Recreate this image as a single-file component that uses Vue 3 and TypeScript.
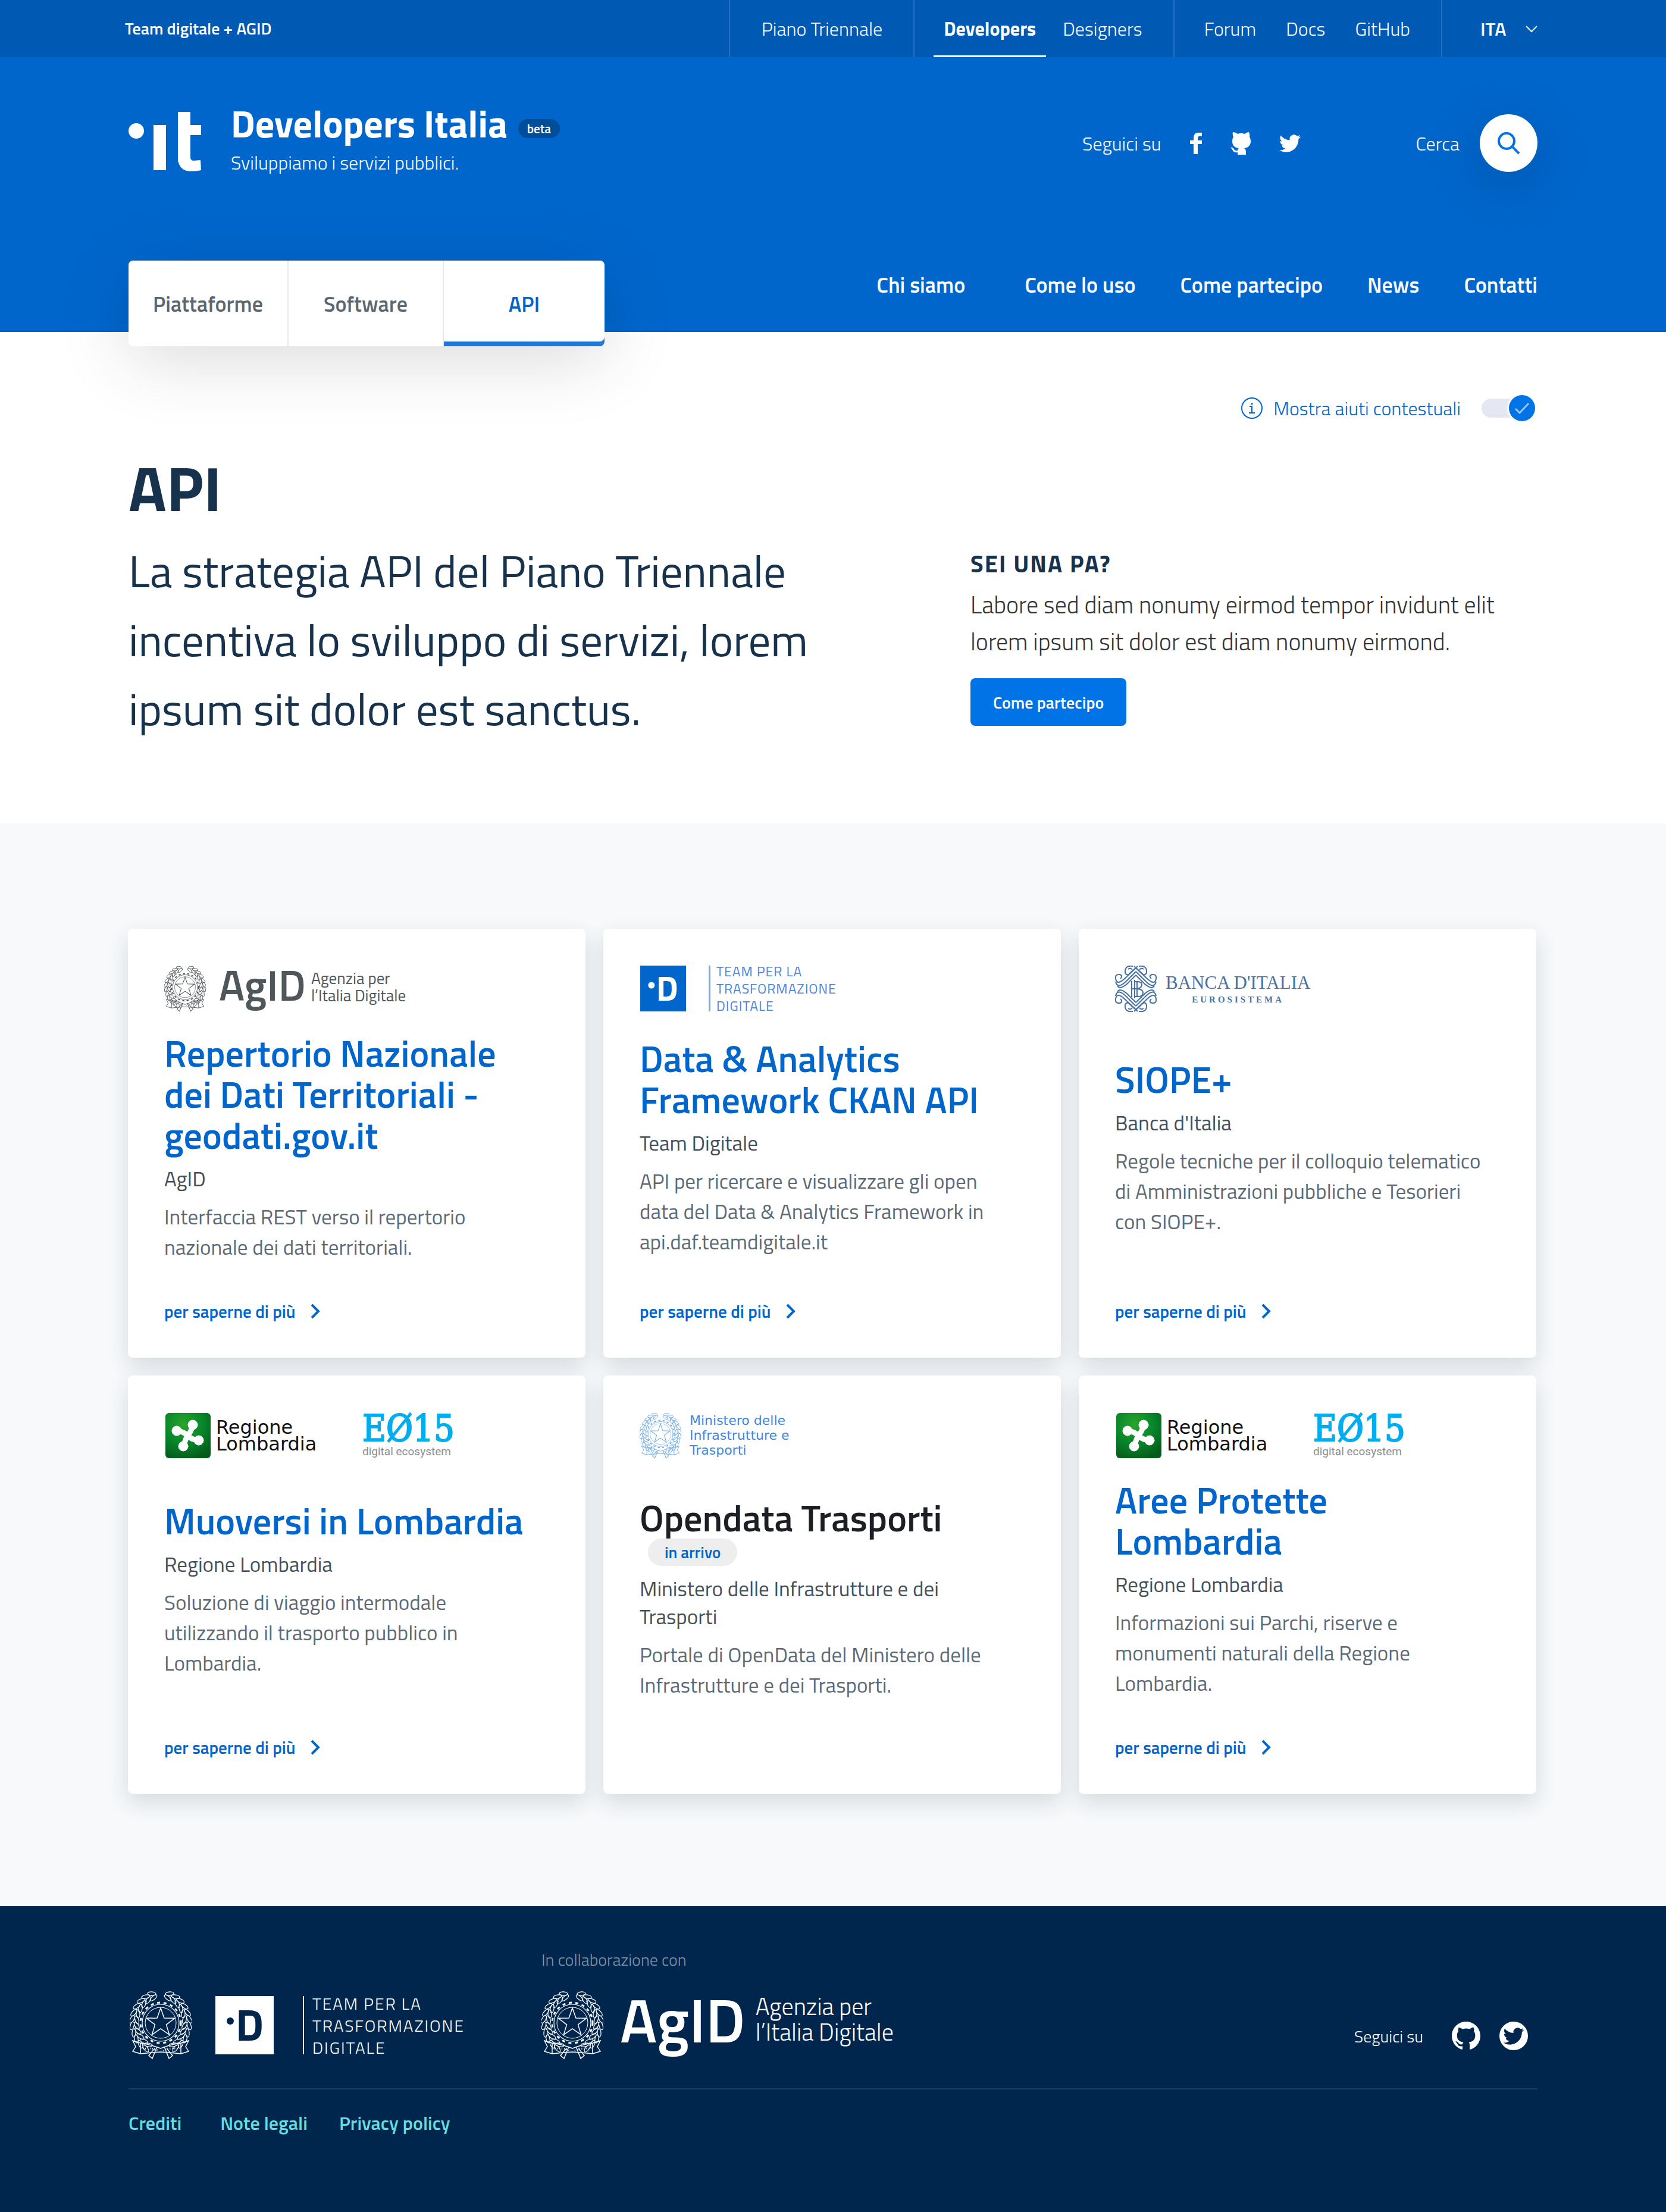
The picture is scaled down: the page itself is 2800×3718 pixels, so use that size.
<script setup lang="ts">
import { ref } from 'vue'

type LogoKind = 'agid' | 'team' | 'banca' | 'lombardia' | 'ministero'

interface ApiCard {
  logo: LogoKind
  title: string
  owner: string
  text: string
  soon?: boolean
}

const cards: ApiCard[] = [
  {
    logo: 'agid',
    title: 'Repertorio Nazionale dei Dati Territoriali - geodati.gov.it',
    owner: 'AgID',
    text: 'Interfaccia REST verso il repertorio nazionale dei dati territoriali.',
  },
  {
    logo: 'team',
    title: 'Data & Analytics Framework CKAN API',
    owner: 'Team Digitale',
    text: 'API per ricercare e visualizzare gli open data del Data & Analytics Framework in api.daf.teamdigitale.it',
  },
  {
    logo: 'banca',
    title: 'SIOPE+',
    owner: "Banca d'Italia",
    text: 'Regole tecniche per il colloquio telematico di Amministrazioni pubbliche e Tesorieri con SIOPE+.',
  },
  {
    logo: 'lombardia',
    title: 'Muoversi in Lombardia',
    owner: 'Regione Lombardia',
    text: 'Soluzione di viaggio intermodale utilizzando il trasporto pubblico in Lombardia.',
  },
  {
    logo: 'ministero',
    title: 'Opendata Trasporti',
    owner: 'Ministero delle Infrastrutture e dei Trasporti',
    text: 'Portale di OpenData del Ministero delle Infrastrutture e dei Trasporti.',
    soon: true,
  },
  {
    logo: 'lombardia',
    title: 'Aree Protette Lombardia',
    owner: 'Regione Lombardia',
    text: 'Informazioni sui Parchi, riserve e monumenti naturali della Regione Lombardia.',
  },
]

const tabs = ['Piattaforme', 'Software', 'API']
const activeTab = ref('API')
const mainNav = ['Chi siamo', 'Come lo uso', 'Come partecipo', 'News', 'Contatti']
const footerLinks = ['Crediti', 'Note legali', 'Privacy policy']
const showHelp = ref(true)
const language = ref('ITA')

// Leaves of the wreath, laid along both sides of an ellipse.
interface Leaf {
  x: number
  y: number
  angle: number
}
const leaves: Leaf[] = []
for (const side of [-1, 1]) {
  for (let i = 0; i < 11; i++) {
    const t = ((-72 + i * 13) * Math.PI) / 180
    for (const ring of [0, 1]) {
      const rx = 40 + ring * 8
      const ry = 44 + ring * 7
      const x = 52 + side * Math.cos(t) * rx
      const y = 54 + Math.sin(t) * ry
      const angle = side * ((t * 180) / Math.PI + 90 + (ring ? -22 : 22))
      leaves.push({ x: Math.round(x), y: Math.round(y), angle: Math.round(angle) })
    }
  }
}
const starPoints = Array.from({ length: 10 }, (_, i) => {
  const r = i % 2 ? 10 : 25
  const a = (-90 + i * 36) * (Math.PI / 180)
  return `${(52 + Math.cos(a) * r).toFixed(1)},${(54 + Math.sin(a) * r).toFixed(1)}`
}).join(' ')
</script>

<template>
  <div class="page">
    <svg class="defs" aria-hidden="true">
      <symbol id="emblem" viewBox="0 0 104 116">
        <g fill="none" stroke="currentColor">
          <ellipse
            v-for="(leaf, i) in leaves"
            :key="i"
            :cx="leaf.x"
            :cy="leaf.y"
            rx="7"
            ry="3"
            stroke-width="1.3"
            :transform="`rotate(${leaf.angle} ${leaf.x} ${leaf.y})`"
          />
          <circle cx="52" cy="54" r="34" stroke-width="3" stroke-dasharray="5 6" />
          <circle cx="52" cy="54" r="31" stroke-width="1.2" />
          <circle cx="52" cy="54" r="26" stroke-width="1" />
          <polygon :points="starPoints" stroke-width="1.5" />
          <path d="M5 84 L18 88 Q34 90 52 97 Q70 90 86 88 L99 84 L94 94 L99 102 L86 106 Q70 104 52 103 Q34 104 18 106 L5 102 L10 94 Z" stroke-width="1.4" />
          <path d="M18 88 V106 M86 88 V106 M46 94 L38 114 L32 109 L42 97 M58 94 L66 114 L72 109 L62 97" stroke-width="1.5" />
          <path d="M22 98 Q36 95 48 101 M56 101 Q68 95 82 98" stroke-width="3" stroke-dasharray="1 3" />
        </g>
      </symbol>
      <symbol id="bird" viewBox="0 0 24 20">
        <path
          transform="translate(0 -2)"
          fill="currentColor"
          d="M23.953 4.57a10 10 0 01-2.825.775 4.958 4.958 0 002.163-2.723c-.951.555-2.005.959-3.127 1.184a4.92 4.92 0 00-8.384 4.482C7.69 8.095 4.067 6.13 1.64 3.162a4.822 4.822 0 00-.666 2.475c0 1.71.87 3.213 2.188 4.096a4.904 4.904 0 01-2.228-.616v.06a4.923 4.923 0 003.946 4.827 4.996 4.996 0 01-2.212.085 4.936 4.936 0 004.604 3.417 9.867 9.867 0 01-6.102 2.105c-.39 0-.779-.023-1.17-.067a13.995 13.995 0 007.557 2.209c9.053 0 13.998-7.496 13.998-13.985 0-.21 0-.42-.015-.63A9.935 9.935 0 0024 4.59z"
        />
      </symbol>
    </svg>

    <div class="topbar">
      <div class="container topbar-row">
        <a class="owner" href="#">Team digitale + AGID</a>
        <nav class="topnav" aria-label="Siti">
          <div class="group"><a href="#">Piano Triennale</a></div>
          <div class="group group-sites">
            <a class="current" href="#">Developers</a>
            <a href="#">Designers</a>
          </div>
          <div class="group">
            <a href="#">Forum</a>
            <a href="#">Docs</a>
            <a href="#">GitHub</a>
          </div>
          <div class="group group-lang">
            <select v-model="language" aria-label="Lingua">
              <option>ITA</option>
              <option>ENG</option>
            </select>
            <svg class="caret" viewBox="0 0 20 12" aria-hidden="true">
              <path d="M1 1 L10 10 L19 1" fill="none" stroke="#fff" stroke-width="2" />
            </svg>
          </div>
        </nav>
      </div>
    </div>

    <header class="header">
      <div class="container">
        <div class="brand-row">
          <a class="brand" href="#">
            <svg class="mark" viewBox="0 0 122 100" aria-hidden="true">
              <g fill="#fff">
                <circle cx="13" cy="32" r="13" />
                <rect x="42" y="22" width="21" height="76" />
                <rect x="83" y="0" width="21" height="84" />
                <rect x="83" y="22" width="39" height="17" />
                <path d="M83 76 H104 Q104 82 110 82 L121 81 L122 98 Q114 100 106 100 Q83 100 83 76 Z" />
              </g>
            </svg>
            <span class="brand-text">
              <span class="brand-title">Developers Italia <span class="beta">beta</span></span>
              <span class="tagline">Sviluppiamo i servizi pubblici.</span>
            </span>
          </a>
          <div class="social">
            <span>Seguici su</span>
            <a href="#" aria-label="Facebook">
              <svg class="ico-f" viewBox="0 0 20 36"><path fill="#fff" d="M6 36 V19 H0 V13 H6 V9 Q6 0 14 0 H20 V6 H16 Q13 6 13 9 V13 H20 V19 H13 V36 Z" /></svg>
            </a>
            <a href="#" aria-label="GitHub">
              <svg class="ico-cat" viewBox="0 0 34 38"><path fill="#fff" d="M4 0 Q8 0 12 3 Q18 1 24 3 Q28 0 31 0 Q33 5 32 8 Q34 11 34 15 Q34 26 23 27 Q26 29 26 32 V38 H12 V34 Q6 35 4 31 Q3 28 0 26 Q4 25 6 29 Q8 32 12 31 Q12 28 14 27 Q3 26 3 15 Q3 11 5 8 Q3 5 4 0 Z" /></svg>
            </a>
            <a href="#" aria-label="Twitter"><svg class="ico-bird"><use href="#bird" /></svg></a>
          </div>
          <div class="search">
            <label for="search-button">Cerca</label>
            <button id="search-button" type="button" aria-label="Cerca">
              <svg viewBox="0 0 38 38" aria-hidden="true">
                <circle cx="15" cy="15" r="13" fill="none" stroke="#0073e6" stroke-width="4" />
                <path d="M24 24 L36 36" stroke="#0073e6" stroke-width="4" />
              </svg>
            </button>
          </div>
        </div>
        <div class="nav-row">
          <div class="tabs">
            <button
              v-for="tab in tabs"
              :key="tab"
              type="button"
              :class="{ active: tab === activeTab }"
              @click="activeTab = tab"
            >
              {{ tab }}
            </button>
          </div>
          <nav class="mainnav" aria-label="Principale">
            <a v-for="item in mainNav" :key="item" href="#">{{ item }}</a>
          </nav>
        </div>
      </div>
    </header>

    <main>
      <section class="hero">
        <div class="container">
          <div class="help">
            <svg class="info" viewBox="0 0 36 36" aria-hidden="true">
              <g fill="none" stroke="#0066cc" stroke-width="2">
                <circle cx="18" cy="18" r="17" />
                <path d="M14 15 H18 V26 M13 26 H23" />
                <path d="M18 9 V12" stroke-width="3" />
              </g>
            </svg>
            <label for="help-toggle">Mostra aiuti contestuali</label>
            <span class="switch">
              <input id="help-toggle" v-model="showHelp" type="checkbox" />
              <span class="knob">
                <svg viewBox="0 0 26 20" aria-hidden="true"><path d="M2 11 L9 18 L24 2" fill="none" stroke="#99c7f5" stroke-width="3" /></svg>
              </span>
            </span>
          </div>
          <div class="hero-grid">
            <div>
              <h1>API</h1>
              <p class="lead">La strategia API del Piano Triennale incentiva lo sviluppo di servizi, lorem ipsum sit dolor est sanctus.</p>
            </div>
            <div class="aside">
              <h2>SEI UNA PA?</h2>
              <p>Labore sed diam nonumy eirmod tempor invidunt elit lorem ipsum sit dolor est diam nonumy eirmond.</p>
              <button type="button">Come partecipo</button>
            </div>
          </div>
        </div>
      </section>

      <section class="catalog">
        <div class="container">
          <div class="grid">
            <article v-for="card in cards" :key="card.title" class="card">
              <div v-if="card.logo === 'agid'" class="logo logo-agid">
                <svg class="emblem"><use href="#emblem" /></svg>
                <span class="agid-name">AgID</span>
                <span class="agid-full">Agenzia per<br />l’Italia Digitale</span>
              </div>
              <div v-else-if="card.logo === 'team'" class="logo logo-team">
                <svg class="tile" viewBox="0 0 98 98" aria-hidden="true">
                  <rect width="98" height="98" fill="#0066cc" />
                  <circle cx="24" cy="42" r="7" fill="#fff" />
                  <text x="34" y="75" class="tile-letter" fill="#fff">D</text>
                </svg>
                <span class="team-name">TEAM PER LA<br />TRASFORMAZIONE<br />DIGITALE</span>
              </div>
              <div v-else-if="card.logo === 'banca'" class="logo logo-banca">
                <svg class="knot" viewBox="0 0 70 78" aria-hidden="true">
                  <g fill="none" stroke="#4672a8" stroke-width="2">
                    <g v-for="n in 4" :key="n" :transform="['', 'translate(70 0) scale(-1 1)', 'translate(0 78) scale(1 -1)', 'translate(70 78) scale(-1 -1)'][n - 1]">
                      <path d="M35 4 L16 22 Q3 34 1 22 Q0 14 8 15 Q14 17 9 22" />
                      <path d="M35 10 L18 27 Q4 40 1 27" />
                      <path d="M35 16 L20 31 Q8 41 4 34" />
                      <path d="M30 1 Q16 -1 17 12 Q20 19 26 12 L38 1" />
                      <path d="M22 6 Q26 3 29 7" />
                    </g>
                    <path d="M28 26 V53 M33 24 V55 M28 39 H37 M37 27 V52 M33 27 H39 Q46 28 45 33 Q44 38 37 39 Q47 40 47 45 Q47 52 39 52 H33" />
                  </g>
                </svg>
                <span class="banca-name">BANCA D'ITALIA<small>EUROSISTEMA</small></span>
              </div>
              <div v-else-if="card.logo === 'lombardia'" class="logo logo-lombardia">
                <svg class="rose" viewBox="0 0 76 76" aria-hidden="true">
                  <defs>
                    <radialGradient id="green" cx="0.4" cy="0.25" r="0.8">
                      <stop offset="0" stop-color="#2aa52c" />
                      <stop offset="0.55" stop-color="#07852a" />
                      <stop offset="1" stop-color="#045c1b" />
                    </radialGradient>
                  </defs>
                  <rect width="76" height="76" rx="6" fill="url(#green)" />
                  <g fill="#fff" stroke="#fff" stroke-linecap="round">
                    <path d="M46 21 Q42 34 37 38 Q34 44 30 56 M19 30 Q31 31 37 38 Q44 45 56 46" fill="none" stroke-width="9" />
                    <circle cx="46" cy="20" r="8" />
                    <circle cx="19" cy="30" r="8" />
                    <circle cx="30" cy="56" r="8" />
                    <circle cx="56" cy="46" r="8" />
                  </g>
                </svg>
                <span class="region-name">Regione<br />Lombardia</span>
                <span class="e015">EØ15<small>digital ecosystem</small></span>
              </div>
              <div v-else class="logo logo-ministero">
                <svg class="emblem"><use href="#emblem" /></svg>
                <span class="ministry-name">Ministero delle<br />Infrastrutture e<br />Trasporti</span>
              </div>

              <div class="card-body">
                <h3 :class="{ muted: card.soon }">
                  <template v-if="card.soon">{{ card.title }}</template>
                  <a v-else href="#">{{ card.title }}</a>
                </h3>
                <span v-if="card.soon" class="soon">in arrivo</span>
                <p class="card-owner">{{ card.owner }}</p>
                <p class="card-text">{{ card.text }}</p>
              </div>
              <a v-if="!card.soon" class="more" href="#">
                per saperne di più
                <svg viewBox="0 0 18 26" aria-hidden="true"><path d="M3 2 L14 13 L3 24" fill="none" stroke="currentColor" stroke-width="4" /></svg>
              </a>
            </article>
          </div>
        </div>
      </section>
    </main>

    <footer class="footer">
      <div class="container">
        <div class="footer-row">
          <div class="footer-team">
            <svg class="emblem"><use href="#emblem" /></svg>
            <svg class="tile" viewBox="0 0 98 98" aria-hidden="true">
              <rect width="98" height="98" fill="#fff" />
              <circle cx="25" cy="42" r="6" fill="#00264d" />
              <text x="34" y="75" class="tile-letter" fill="#00264d">D</text>
            </svg>
            <span class="team-name">TEAM PER LA<br />TRASFORMAZIONE<br />DIGITALE</span>
          </div>
          <div class="footer-agid">
            <span class="collab">In collaborazione con</span>
            <div class="footer-agid-logo">
              <svg class="emblem"><use href="#emblem" /></svg>
              <span class="agid-name">AgID</span>
              <span class="agid-full">Agenzia per<br />l’Italia Digitale</span>
            </div>
          </div>
          <div class="footer-social">
            <span>Seguici su</span>
            <a href="#" aria-label="GitHub">
              <svg viewBox="0 0 16 16"><path fill="#fff" d="M8 0C3.58 0 0 3.58 0 8c0 3.54 2.29 6.53 5.47 7.59.4.07.55-.17.55-.38 0-.19-.01-.82-.01-1.49-2.01.37-2.53-.49-2.69-.94-.09-.23-.48-.94-.82-1.13-.28-.15-.68-.52-.01-.53.63-.01 1.08.58 1.23.82.72 1.21 1.87.87 2.33.66.07-.52.28-.87.51-1.07-1.78-.2-3.64-.89-3.64-3.95 0-.87.31-1.59.82-2.15-.08-.2-.36-1.02.08-2.12 0 0 .67-.21 2.2.82.64-.18 1.32-.27 2-.27.68 0 1.36.09 2 .27 1.53-1.04 2.2-.82 2.2-.82.44 1.1.16 1.92.08 2.12.51.56.82 1.27.82 2.15 0 3.07-1.87 3.75-3.65 3.95.29.25.54.73.54 1.48 0 1.07-.01 1.93-.01 2.2 0 .21.15.46.55.38A8.013 8.013 0 0016 8c0-4.42-3.58-8-8-8z" /></svg>
            </a>
            <a href="#" aria-label="Twitter">
              <svg class="bird-badge" viewBox="0 0 48 48">
                <circle cx="24" cy="24" r="24" fill="#fff" />
                <use href="#bird" x="6" y="10" width="36" height="29" />
              </svg>
            </a>
          </div>
        </div>
        <nav class="footer-links" aria-label="Note">
          <a v-for="item in footerLinks" :key="item" href="#">{{ item }}</a>
        </nav>
      </div>
    </footer>
  </div>
</template>

<style>
body {
  margin: 0;
  background: #fff;
}
</style>

<style scoped>
.page {
  font-family: 'Titillium Web', Roboto, 'Open Sans', sans-serif;
  color: #17324d;
}
.page * {
  box-sizing: border-box;
}
.page a {
  color: inherit;
  text-decoration: none;
}
.page button,
.page select {
  font-family: inherit;
  border: 0;
  cursor: pointer;
}
h1,
h2,
h3,
p {
  margin: 0;
}
svg {
  display: block;
  flex: none;
}
.defs {
  position: absolute;
  width: 0;
  height: 0;
}
.container {
  max-width: 2368px;
  margin: 0 auto;
}

/* top bar */
.topbar {
  background: #0059b3;
  color: #fff;
}
.topbar-row {
  display: flex;
  justify-content: space-between;
}
.owner {
  margin-left: -6px;
  font-size: 28px;
  line-height: 96px;
  font-weight: 600;
}
.topnav {
  display: flex;
  font-size: 32px;
  line-height: 96px;
  font-weight: 300;
}
.group {
  display: flex;
  gap: 50px;
  padding: 0 52px 0 50px;
  border-left: 2px solid #2670bf;
}
.group:first-child {
  padding-left: 53px;
}
.group-sites {
  gap: 28px;
  padding-left: 32px;
}
.current {
  padding: 0 17px;
  box-shadow: inset 0 -3px #fff;
  font-weight: 700;
}
.group-lang {
  position: relative;
  padding: 0 0 0 64px;
}
.group-lang select {
  appearance: none;
  width: 96px;
  padding: 0;
  background: transparent;
  color: #fff;
  font-size: 32px;
  font-weight: 600;
}
.caret {
  position: absolute;
  right: 0;
  top: 43px;
  width: 20px;
  height: 12px;
  pointer-events: none;
}

/* header */
.header {
  background: #0066cc;
  color: #fff;
}
.brand-row {
  display: flex;
  align-items: center;
  height: 214px;
  padding-top: 75px;
}
.brand {
  display: flex;
  align-self: flex-start;
  margin-right: auto;
}
.mark {
  width: 122px;
  height: 100px;
  margin: 17px 50px 0 0;
}
.brand-text {
  display: flex;
  flex-direction: column;
  gap: 10px;
}
.brand-title {
  display: flex;
  align-items: center;
  gap: 18px;
  font-size: 64px;
  line-height: 72px;
  font-weight: 700;
}
.beta {
  margin-top: 18px;
  padding: 0 15px;
  border-radius: 16px;
  background: #004d99;
  font-size: 21px;
  line-height: 32px;
  font-weight: 600;
}
.tagline {
  font-size: 32px;
  line-height: 40px;
  font-weight: 300;
}
.social {
  display: flex;
  align-items: center;
  gap: 48px;
  font-size: 32px;
  font-weight: 300;
}
.ico-f {
  width: 20px;
  height: 36px;
}
.ico-cat {
  width: 34px;
  height: 38px;
}
.ico-bird {
  width: 36px;
  height: 30px;
}
.search {
  display: flex;
  align-items: center;
  gap: 34px;
  margin-left: 194px;
  font-size: 32px;
  font-weight: 300;
}
.search button {
  display: grid;
  place-items: center;
  width: 97px;
  height: 97px;
  padding: 0;
  border-radius: 50%;
  background: #fff;
  box-shadow: 0 20px 100px rgba(0, 0, 0, 0.2);
}
.search svg {
  width: 38px;
  height: 38px;
}
.nav-row {
  position: relative;
  display: flex;
  justify-content: space-between;
  height: 120px;
  margin-top: 128px;
}
.tabs {
  display: grid;
  grid-template-columns: 269px 261px 270px;
  height: 144px;
  border-radius: 8px;
  background: #fff;
  box-shadow: 0 20px 120px rgba(0, 0, 0, 0.15);
}
.tabs button {
  background: #fff;
  border-right: 2px solid #e6e9ec;
  color: #5b6871;
  font-size: 36px;
  font-weight: 600;
}
.tabs button:first-child {
  border-radius: 8px 0 0 8px;
}
.tabs button:last-child {
  border-right: 0;
  border-radius: 0 8px 8px 0;
}
.tabs .active {
  color: #0066cc;
  box-shadow: inset 0 -8px #1f78d8;
}
.mainnav {
  display: flex;
  gap: 75px;
  padding-top: 21px;
  font-size: 36px;
  line-height: 40px;
  font-weight: 600;
}
.mainnav a:first-child {
  margin-right: 25px;
}

/* hero */
.hero {
  padding: 104px 0 135px;
}
.help {
  display: flex;
  justify-content: flex-end;
  align-items: center;
  height: 48px;
  padding-right: 4px;
  color: #0066cc;
  font-size: 32px;
  font-weight: 300;
}
.info {
  width: 36px;
  height: 36px;
  margin-right: 18px;
}
.switch {
  display: grid;
  align-items: center;
  justify-items: end;
  width: 90px;
  height: 44px;
  margin-left: 35px;
}
.switch > * {
  grid-area: 1 / 1;
}
.switch input {
  appearance: none;
  justify-self: start;
  width: 80px;
  height: 32px;
  margin: 0;
  border-radius: 16px;
  background: #e5e8f2;
  cursor: pointer;
}
.knob {
  display: grid;
  place-items: center;
  width: 44px;
  height: 44px;
  border-radius: 50%;
  background: #0073e6;
  box-shadow: 0 0 0 3px #fff;
  pointer-events: none;
}
.knob svg {
  width: 26px;
  height: 20px;
}
.hero-grid {
  display: grid;
  grid-template-columns: 1415fr 953fr;
  margin-top: 54px;
}
h1 {
  font-size: 106px;
  line-height: 112px;
  font-weight: 700;
}
.lead {
  max-width: 1200px;
  margin-top: 25px;
  font-size: 75px;
  line-height: 116px;
  font-weight: 400;
}
.aside {
  padding-top: 160px;
}
.aside h2 {
  font-size: 40px;
  line-height: 48px;
  font-weight: 700;
  letter-spacing: 2px;
}
.aside p {
  max-width: 920px;
  margin-top: 14px;
  color: #333;
  font-size: 40px;
  line-height: 62px;
  font-weight: 300;
}
.aside button {
  height: 80px;
  margin-top: 30px;
  padding: 0 38px;
  border-radius: 8px;
  background: #0073e6;
  color: #fff;
  font-size: 28px;
  font-weight: 600;
}

/* cards */
.catalog {
  padding: 177px 0 189px;
  background: #f7f9fb;
}
.grid {
  display: grid;
  grid-template-columns: repeat(3, 1fr);
  gap: 30px;
  margin: 0 2px 0 -1px;
}
.card {
  display: flex;
  flex-direction: column;
  padding: 62px 61px;
  border-radius: 8px;
  background: #fff;
  box-shadow: 0 14px 36px rgba(40, 60, 80, 0.16);
}
.logo {
  display: flex;
  align-items: center;
  height: 77px;
}
.logo .emblem {
  width: 70px;
  height: 78px;
}
.logo-agid {
  color: #50575a;
}
.agid-name {
  font-weight: 600;
}
.logo .agid-name {
  margin: 0 9px 12px 22px;
  font-size: 72px;
  line-height: 77px;
}
.logo .agid-full {
  margin-bottom: 8px;
  font-size: 27px;
  line-height: 29px;
}
.logo-team {
  color: #4c86dd;
}
.tile {
  overflow: visible;
}
.tile-letter {
  font-size: 74px;
  font-weight: 700;
}
.logo .tile {
  width: 79px;
  height: 77px;
  margin-right: 37px;
}
.team-name {
  display: flex;
  align-items: center;
}
.logo .team-name {
  height: 77px;
  padding-left: 10px;
  border-left: 3px solid #7ea6e6;
  font-size: 23px;
  line-height: 29px;
  letter-spacing: 1px;
}
.knot {
  width: 70px;
  height: 78px;
  margin-right: 15px;
}
.banca-name {
  display: flex;
  flex-direction: column;
  align-items: center;
  color: #4672a8;
  font-family: 'Liberation Serif', serif;
  font-size: 31px;
  line-height: 36px;
}
.banca-name small {
  font-size: 15px;
  line-height: 20px;
  font-weight: 700;
  letter-spacing: 4px;
}
.rose {
  width: 76px;
  height: 76px;
  margin: 0 9px 0 2px;
}
.region-name {
  width: 246px;
  color: #111;
  font-family: 'DejaVu Sans', sans-serif;
  font-size: 32px;
  line-height: 28px;
}
.e015 {
  display: flex;
  flex-direction: column;
  color: #00aeef;
  font-family: 'DejaVu Serif Condensed', 'DejaVu Serif', serif;
  font-size: 61px;
  line-height: 54px;
  -webkit-text-stroke: 2px #00aeef;
}
.e015 small {
  color: #8a8f92;
  font-family: Roboto, sans-serif;
  font-size: 19px;
  line-height: 23px;
  -webkit-text-stroke: 0;
}
.logo-ministero {
  color: #72ade8;
}
.ministry-name {
  margin-left: 14px;
  color: #3f86dd;
  font-family: 'DejaVu Sans', sans-serif;
  font-size: 22px;
  line-height: 25px;
}
.card-body {
  display: flex;
  flex: 1;
  flex-direction: column;
  justify-content: center;
  align-items: flex-start;
  padding: 36px 20px 35px 0;
  margin-bottom: 31px;
}
h3 {
  color: #0066cc;
  font-size: 62px;
  line-height: 69px;
  font-weight: 600;
}
.muted {
  color: #1c2024;
}
.soon {
  margin-left: 14px;
  padding: 0 28px;
  border-radius: 23px;
  background: #eee;
  color: #0066cc;
  font-size: 27px;
  line-height: 46px;
  font-weight: 600;
}
.card-owner {
  margin-top: 15px;
  color: #43505a;
  font-size: 35px;
  line-height: 47px;
}
.card-text {
  margin-top: 15px;
  color: #5c6a76;
  font-size: 35px;
  line-height: 51px;
}
.more {
  display: flex;
  align-items: center;
  gap: 24px;
  font-size: 29px;
  line-height: 32px;
  font-weight: 600;
}
.page .more {
  color: #0066cc;
}
.more svg {
  width: 18px;
  height: 26px;
}

/* footer */
.footer {
  padding: 74px 0 131px;
  background: #00264d;
  color: #fff;
}
.footer-row {
  display: flex;
  align-items: flex-end;
  padding-bottom: 48px;
  border-bottom: 2px solid #1f3f61;
}
.footer .emblem {
  width: 104px;
  height: 116px;
}
.footer-team {
  display: flex;
  align-items: center;
  width: 694px;
  padding-left: 2px;
}
.footer .tile {
  width: 98px;
  height: 98px;
  margin: 0 49px 0 40px;
}
.footer .team-name {
  height: 98px;
  padding-left: 14px;
  border-left: 2px solid #fff;
  font-size: 28px;
  line-height: 37px;
  font-weight: 300;
  letter-spacing: 2px;
}
.footer-agid {
  display: flex;
  flex-direction: column;
  gap: 36px;
}
.collab {
  color: #8092a6;
  font-size: 28px;
  line-height: 32px;
  font-weight: 300;
}
.footer-agid-logo {
  display: flex;
  align-items: center;
}
.footer .agid-name {
  margin: 0 17px 20px 28px;
  font-size: 104px;
  line-height: 96px;
}
.footer .agid-full {
  margin-bottom: 20px;
  font-size: 40px;
  line-height: 43px;
  font-weight: 300;
}
.footer-social {
  display: flex;
  align-items: center;
  gap: 32px;
  margin: 0 16px 16px auto;
  font-size: 28px;
  font-weight: 300;
}
.footer-social span {
  margin-right: 16px;
}
.footer-social svg {
  width: 48px;
  height: 48px;
}
.bird-badge use {
  color: #00264d;
}
.footer-links {
  display: flex;
  gap: 53px;
  padding-top: 36px;
  font-size: 32px;
  line-height: 40px;
  font-weight: 600;
}
.footer-links a:first-child {
  margin-right: 12px;
}
.page .footer-links a {
  color: #65dcdf;
}
</style>
